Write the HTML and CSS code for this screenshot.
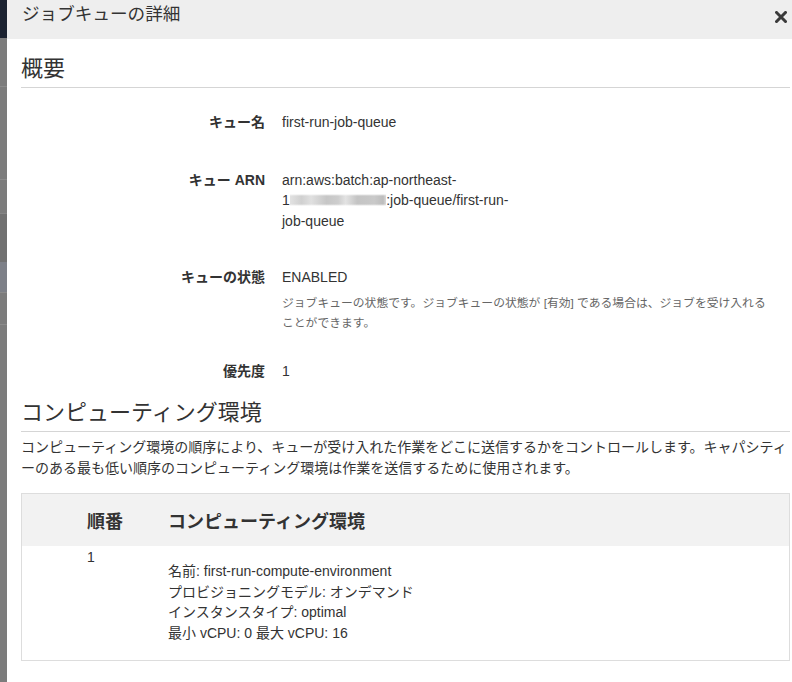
FILE: index.html
```html
<!DOCTYPE html>
<html lang="ja">
<head>
  <meta charset="UTF-8">
  <title>ジョブキューの詳細</title>
  <link rel="stylesheet" href="styles.css">
</head>
<body>

  <div class="backdrop"></div>

  <div class="modal">
    <div class="modal-header">
      <span class="modal-title">ジョブキューの詳細</span>
      <button class="close" aria-label="閉じる">
        <svg width="12" height="12" viewBox="0 0 12 12">
          <path d="M1.5 1.5 L10.5 10.5 M10.5 1.5 L1.5 10.5" stroke="#3a3a3a" stroke-width="3" stroke-linecap="square"/>
        </svg>
      </button>
    </div>

    <div class="modal-body">
      <h2 class="section-title">概要</h2>

      <div class="details">
        <div class="row">
          <div class="label">キュー名</div>
          <div class="value">first-run-job-queue</div>
        </div>
        <div class="row row-arn">
          <div class="label">キュー ARN</div>
          <!-- account id is blurred out -->
          <div class="value arn">arn:aws:batch:ap-northeast-<wbr>1<span class="masked">234567890123</span>:job-queue/first-run-job-queue</div>
        </div>
        <div class="row row-tight">
          <div class="label">キューの状態</div>
          <div class="value">
            ENABLED
            <p class="help">ジョブキューの状態です。ジョブキューの状態が [有効] である場合は、ジョブを受け入れることができます。</p>
          </div>
        </div>
        <div class="row">
          <div class="label">優先度</div>
          <div class="value">1</div>
        </div>
      </div>

      <h2 class="section-title second">コンピューティング環境</h2>
      <p class="intro">コンピューティング環境の順序により、キューが受け入れた作業をどこに送信するかをコントロールします。キャパシティーのある最も低い順序のコンピューティング環境は作業を送信するために使用されます。</p>

      <table class="env-table">
        <thead>
          <tr>
            <th class="col-order">順番</th>
            <th>コンピューティング環境</th>
          </tr>
        </thead>
        <tbody>
          <tr>
            <td class="col-order">1</td>
            <td>
              <ul class="env-info">
                <li>名前: first-run-compute-environment</li>
                <li>プロビジョニングモデル: オンデマンド</li>
                <li>インスタンスタイプ: optimal</li>
                <li>最小 vCPU: 0 最大 vCPU: 16</li>
              </ul>
            </td>
          </tr>
        </tbody>
      </table>
    </div>
  </div>

</body>
</html>
```

FILE: styles.css
```css
html, body {
  height: 100%;
}
body {
  margin: 0;
  display: flex;
  overflow: hidden;
  font-family: "Liberation Sans", "Noto Sans CJK JP", sans-serif;
  font-size: 14px;
  color: #333;
  background: #fff;
}

/* the page behind the dialog, mostly covered */
.backdrop {
  width: 7px;
  flex: none;
  background: linear-gradient(to bottom,
    #1b2230 0, #1b2230 38px,
    #7c7c7c 38px, #7c7c7c 86px, #9a9a9a 86px, #7c7c7c 87px,
    #7c7c7c 179px, #9a9a9a 179px, #7c7c7c 180px,
    #7c7c7c 213px, #9a9a9a 213px, #717171 214px,
    #717171 262px, #7d8088 262px, #7d8088 292px, #9a9a9a 292px, #7c7c7c 293px,
    #7c7c7c 324px, #9a9a9a 324px, #7c7c7c 325px, #7c7c7c 100%);
}

.modal {
  flex: 1;
  background: #fff;
}
.modal-header {
  height: 39px;
  background: #eee;
  display: flex;
  justify-content: space-between;
  padding: 1px 4px 0 15px;
  box-sizing: border-box;
}
.modal-title {
  font-size: 17.6px;
  line-height: 26px;
}
.close {
  border: none;
  background: none;
  padding: 0;
  margin-top: 4px;
  width: 14px;
  height: 26px;
}

.modal-body {
  padding: 0 2px 0 14px;
}
.section-title {
  margin: 15px 0 0;
  font-size: 22px;
  font-weight: normal;
  line-height: 30px;
  padding-bottom: 3px;
  border-bottom: 1px solid #d5d5d5;
}
.section-title.second {
  margin-top: 17px;
  padding-bottom: 3px;
}

.details {
  padding-top: 24px;
}
.row {
  display: flex;
  gap: 17px;
  line-height: 20.5px;
  margin-bottom: 37px;
}
.row:last-child {
  margin-bottom: 0;
}
.row-arn {
  margin-bottom: 36px;
}
.row-tight {
  margin-bottom: 28px;
}
.label {
  width: 244px;
  flex: none;
  text-align: right;
  font-weight: bold;
}
.value {
  flex: 1;
}
.arn {
  max-width: 240px;
}
.masked {
  color: transparent;
  padding-left: 3px;
  background:
    linear-gradient(to bottom, #fff 0, #fff 2px, rgba(255,255,255,0) 4px, rgba(255,255,255,0) 12px, #fff 14px, #fff 100%),
    linear-gradient(to right, #e2e2e2 0, #d0d0d0 12%, #e0e0e0 22%, #c6c6c6 38%, #cdcdcd 50%, #e3e3e3 58%, #c4c4c4 70%, #c9c9c9 88%, #bdbdbd 97%, #d8d8d8 100%);
}
.help {
  margin: 5px 0 0;
  max-width: 492px;
  font-size: 11.8px;
  color: #666;
  line-height: 20px;
}

.intro {
  margin: 5px 0 0;
  line-height: 20.5px;
}

.env-table {
  width: 100%;
  margin-top: 15px;
  border-collapse: collapse;
  border: 1px solid #ddd;
}
.env-table th {
  height: 52px;
  padding: 0;
  background: #f2f2f2;
  text-align: left;
  font-size: 18px;
  font-weight: bold;
}
.env-table td {
  vertical-align: top;
  padding: 15px 0 16px;
}
.env-table td.col-order {
  padding-top: 1px;
  line-height: 20px;
}
.env-table .col-order {
  width: 81px;
  padding-left: 65px;
}
.env-info {
  list-style: none;
  margin: 0;
  padding: 0;
  line-height: 20.7px;
}
```
